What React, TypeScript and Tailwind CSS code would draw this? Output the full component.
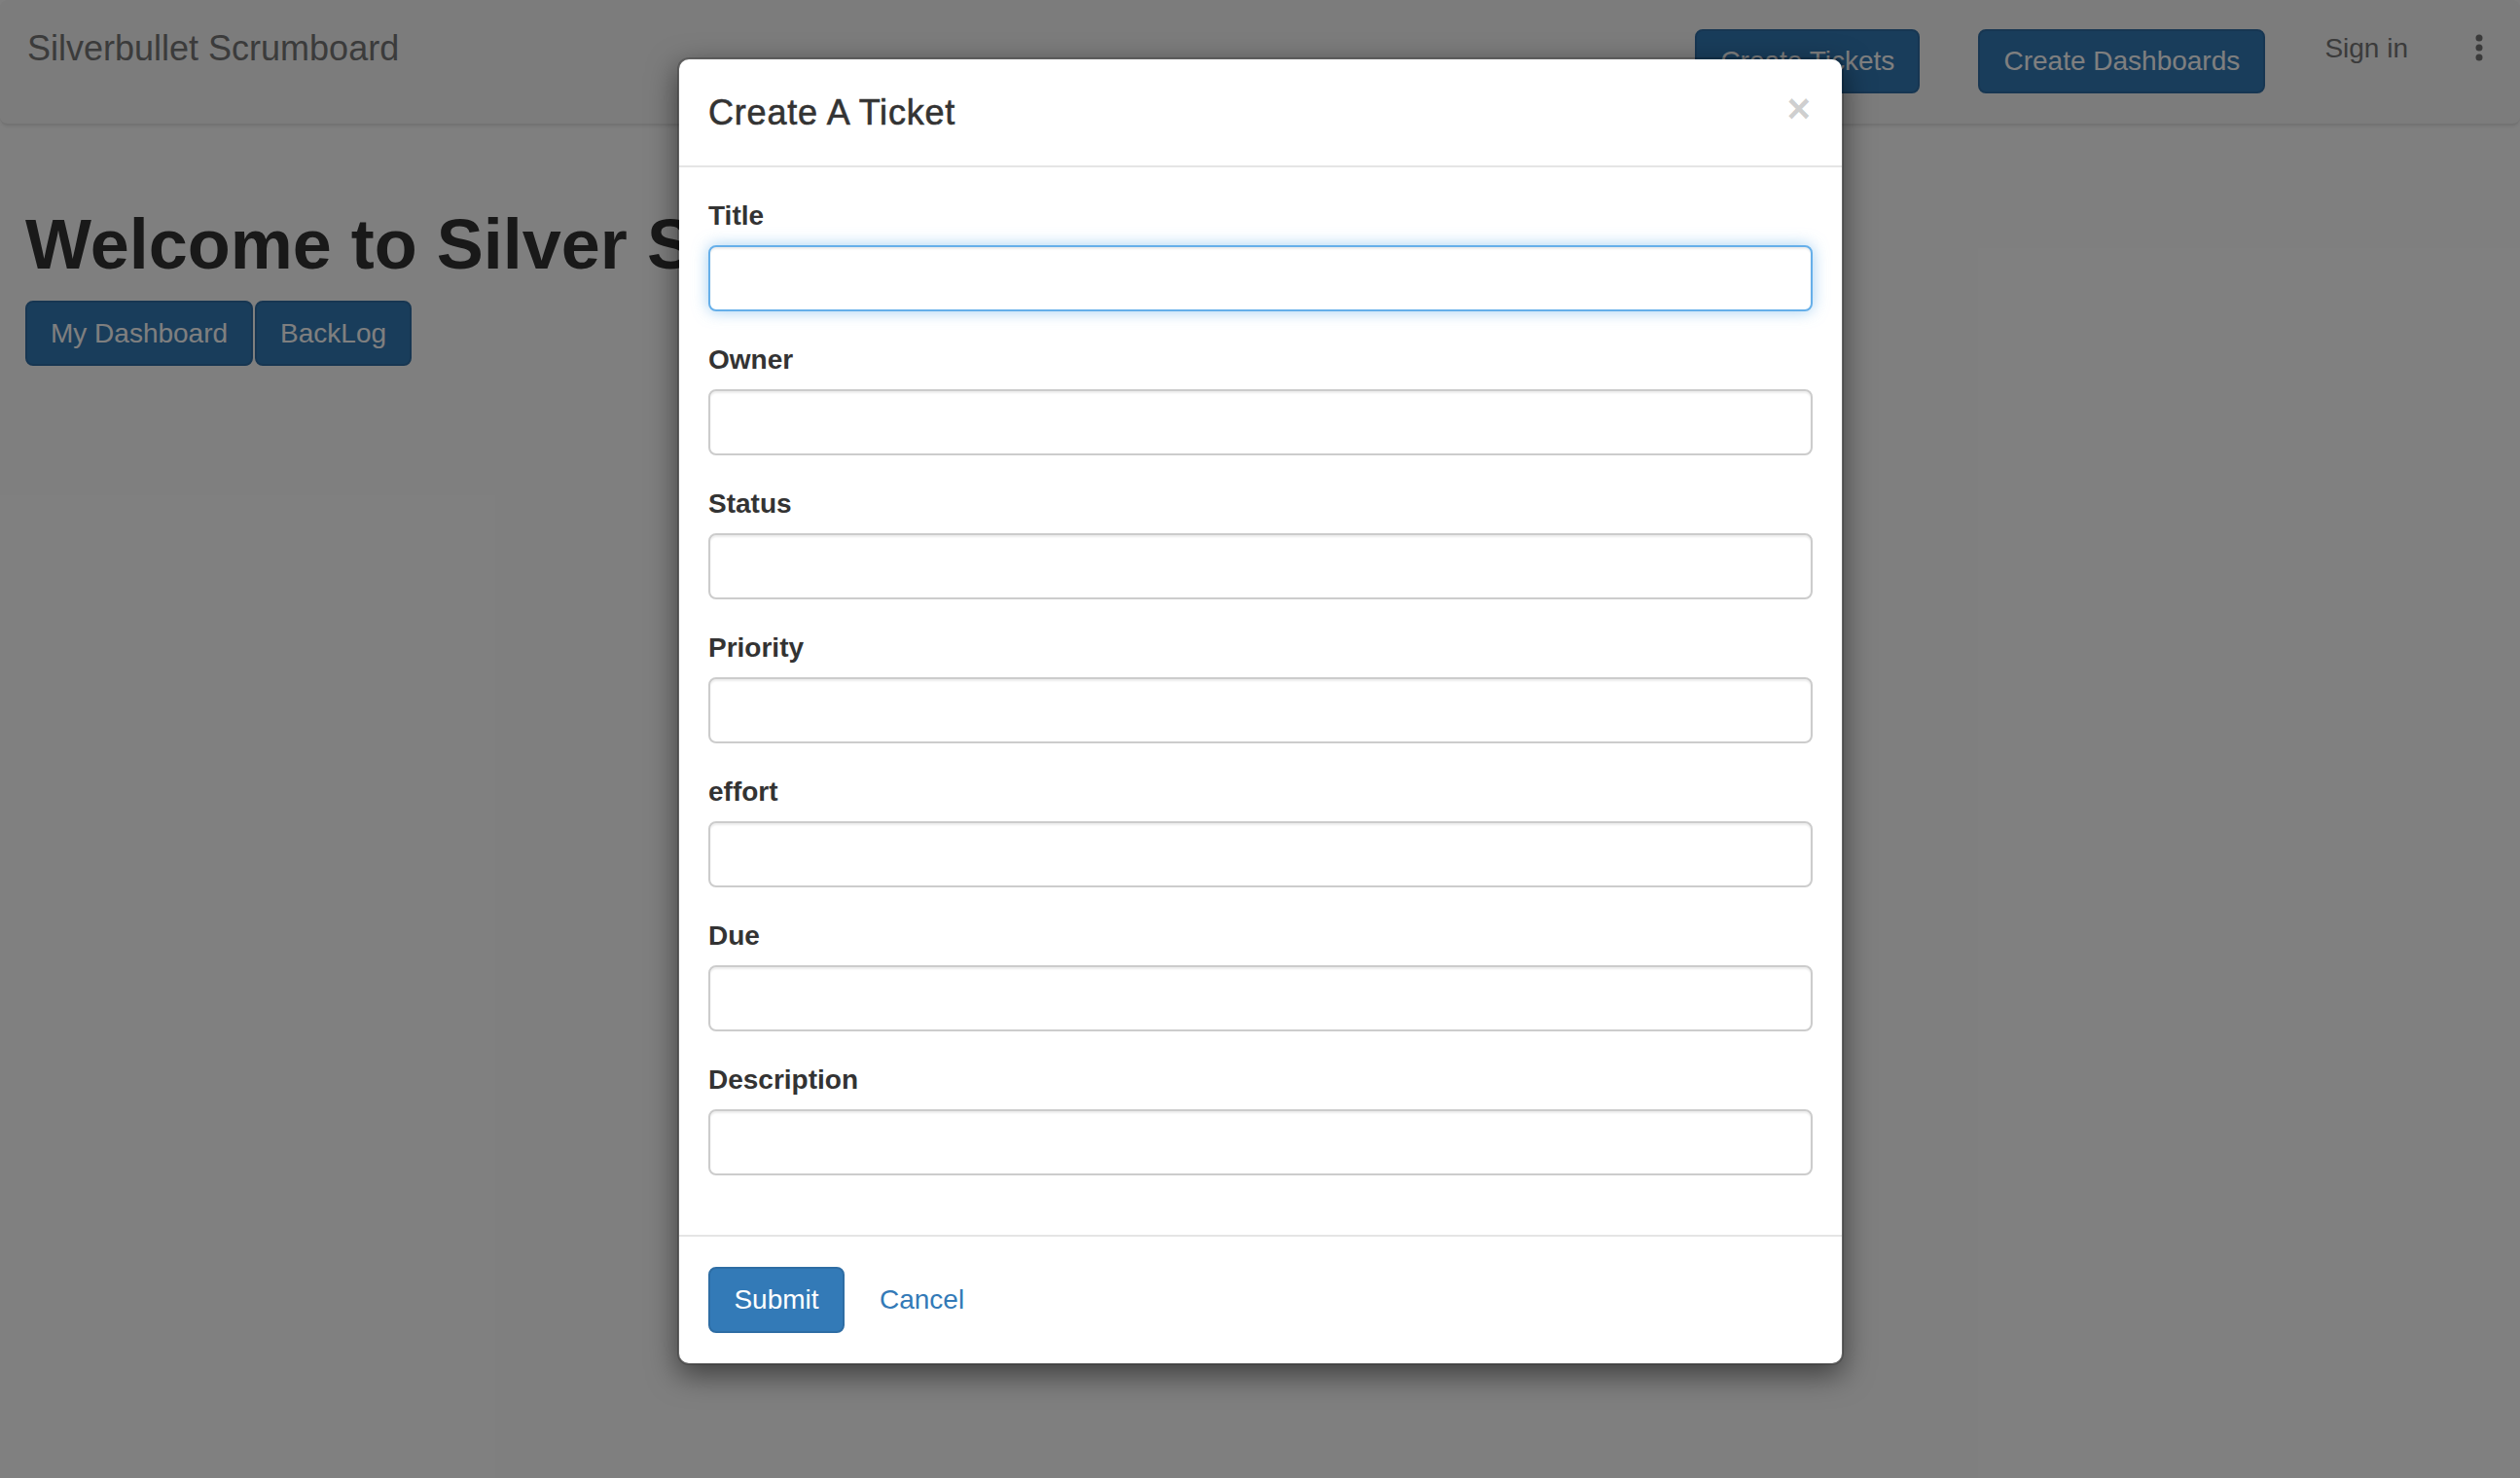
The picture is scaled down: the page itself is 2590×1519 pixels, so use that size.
import React from "react";

const fields = ["Title", "Owner", "Status", "Priority", "effort", "Due", "Description"];

function Kebab() {
  return (
    <svg width="8" height="28" viewBox="0 0 8 28" className="mt-[5px]">
      <circle cx="4" cy="4" r="3.5" fill="#777" />
      <circle cx="4" cy="14" r="3.5" fill="#777" />
      <circle cx="4" cy="24" r="3.5" fill="#777" />
    </svg>
  );
}

export default function App() {
  return (
    <div className="relative h-[1519px] w-full overflow-hidden bg-white font-['Liberation_Sans',Arial,sans-serif] text-[#333]">
      {/* Top navbar */}
      <nav className="flex h-[129px] items-start rounded-[8px] border-b-2 border-[#e7e7e7] bg-[#f8f8f8] pt-[30px] pl-[28px] pr-[38px] shadow-[0_2px_3px_rgba(0,0,0,0.06)]">
        <span className="text-[36px] leading-[40px] text-[#777]">Silverbullet Scrumboard</span>
        <div className="ml-auto flex items-start">
          <button className="h-[66px] w-[231px] rounded-[8px] border-2 border-[#2e6da4] bg-[#337ab7] text-[28px] leading-[40px] text-white">
            Create Tickets
          </button>
          <button className="ml-[60px] h-[66px] w-[295px] rounded-[8px] border-2 border-[#2e6da4] bg-[#337ab7] text-[28px] leading-[40px] text-white">
            Create Dashboards
          </button>
          <span className="ml-[61px] text-[28px] leading-[40px] text-[#777]">Sign in</span>
          <span className="ml-[69px]">
            <Kebab />
          </span>
        </div>
      </nav>

      {/* Page content */}
      <main className="px-[26px] pt-[83px]">
        <h1 className="text-[72px] font-bold leading-[79px] text-[#333]">Welcome to Silver Scrumboard</h1>
        <div className="mt-[18px] flex gap-[2px]">
          <button className="h-[67px] rounded-[8px] border-2 border-[#2e6da4] bg-[#337ab7] px-[24px] text-[28px] leading-[40px] text-white">
            My Dashboard
          </button>
          <button className="h-[67px] rounded-[8px] border-2 border-[#2e6da4] bg-[#337ab7] px-[24px] text-[28px] leading-[40px] text-white">
            BackLog
          </button>
        </div>
      </main>

      {/* Backdrop */}
      <div className="absolute inset-0 bg-black/50" />

      {/* Modal */}
      <div className="absolute left-[696px] top-[59px] w-[1199px] rounded-[12px] border-2 border-black/20 bg-white bg-clip-padding shadow-[0_10px_30px_rgba(0,0,0,0.5)]">
        <div className="flex h-[111px] items-center justify-between border-b-2 border-[#e5e5e5] px-[30px]">
          <h4 className="text-[36px] leading-[50px] tracking-[0.8px] text-[#333] [-webkit-text-stroke:0.6px_#333]">Create A Ticket</h4>
          <span className="-mt-[8px] mr-[2px] text-[42px] font-bold leading-none text-black/20">×</span>
        </div>

        <div className="px-[30px] pt-[30px] pb-[31px]">
          {fields.map((f, i) => (
            <div key={f} className="mb-[30px]">
              <label className="mb-[10px] block text-[28px] font-bold leading-[40px] text-[#333]">{f}</label>
              <input
                type="text"
                className={
                  i === 0
                    ? "block h-[68px] w-full rounded-[8px] border-2 border-[#66afe9] bg-white px-[24px] outline-none shadow-[inset_0_2px_2px_rgba(0,0,0,0.075),0_0_16px_rgba(102,175,233,0.6)]"
                    : "block h-[68px] w-full rounded-[8px] border-2 border-[#ccc] bg-white px-[24px] outline-none shadow-[inset_0_2px_2px_rgba(0,0,0,0.075)]"
                }
              />
            </div>
          ))}
        </div>

        <div className="flex items-center border-t-2 border-[#e5e5e5] px-[30px] pt-[31px] pb-[31px]">
          <button className="h-[68px] w-[140px] rounded-[8px] border-2 border-[#2e6da4] bg-[#337ab7] text-[28px] leading-[40px] text-white">
            Submit
          </button>
          <a className="ml-[36px] text-[28px] leading-[40px] text-[#337ab7]">Cancel</a>
        </div>
      </div>
    </div>
  );
}
